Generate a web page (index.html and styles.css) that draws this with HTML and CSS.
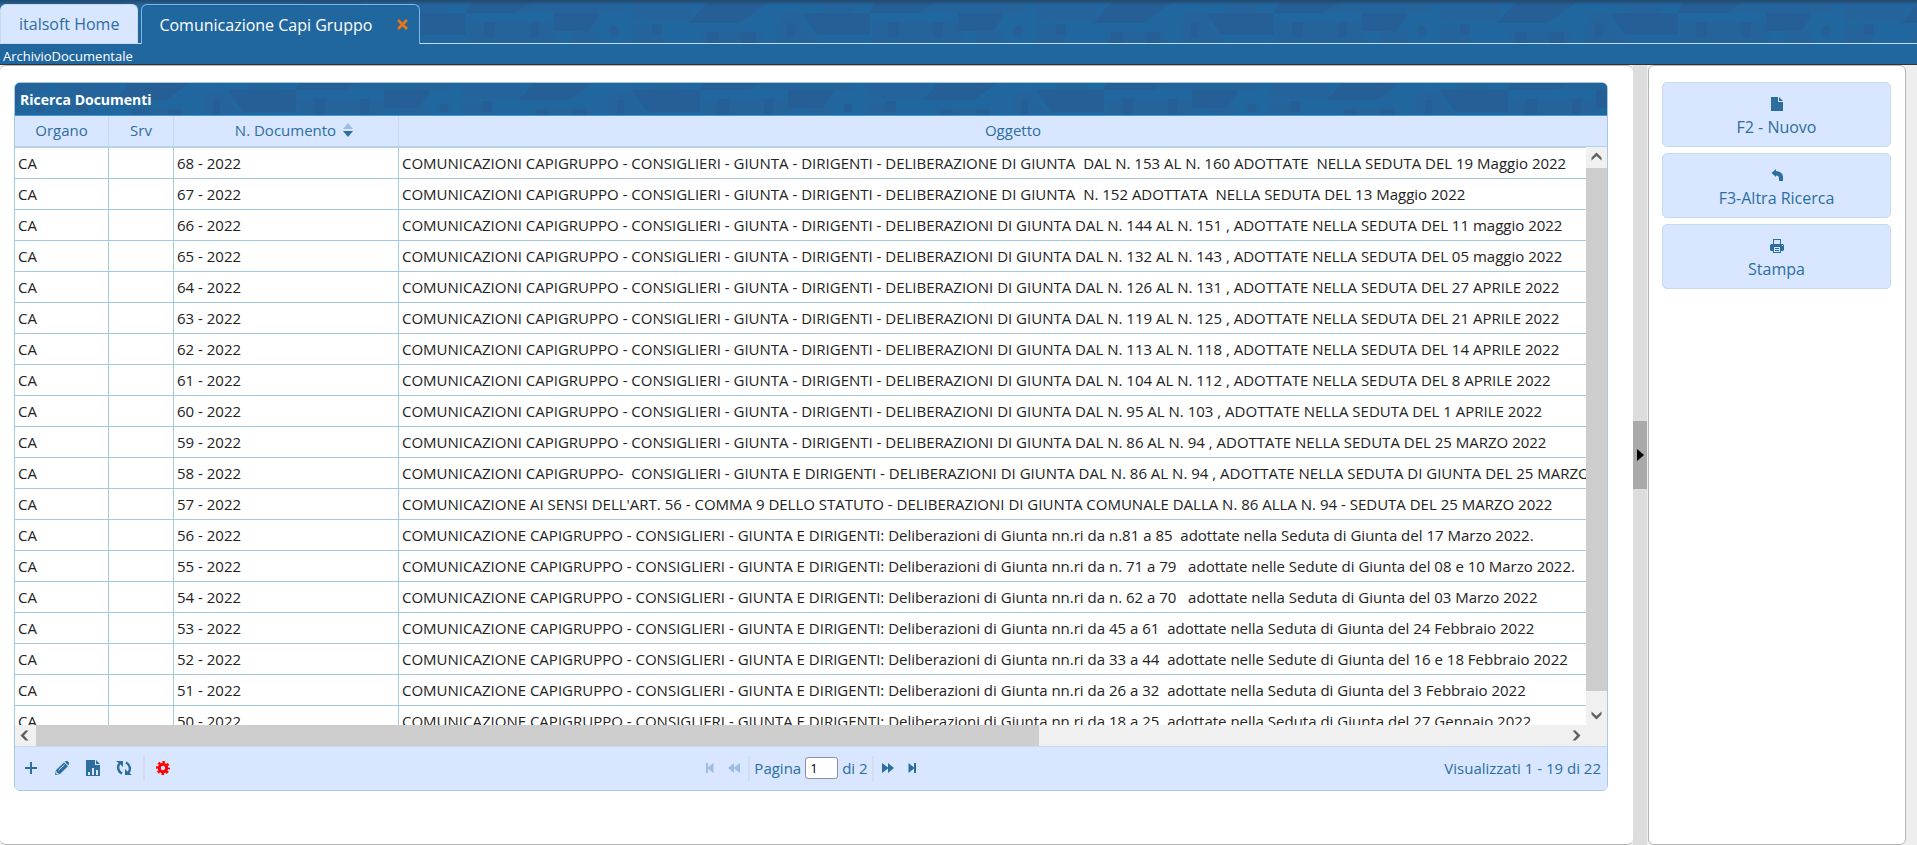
FILE: index.html
```html
<!DOCTYPE html>
<html lang="it">
<head>
<meta charset="utf-8">
<title>Comunicazione Capi Gruppo</title>
<link rel="stylesheet" href="styles.css">
</head>
<body>
<svg class="defs" width="0" height="0" aria-hidden="true">
  <defs>
    <pattern id="blocks" x="168" y="0" width="404" height="128" patternUnits="userSpaceOnUse">
      <rect width="404" height="128" fill="#21679f"/>
      <g fill="#24649b">
        <path d="M0 2h50v11H0zM60 2h14v20H60zM0 31h27v12H0zM60 25h30v18H60zM75 2h45v20H75zM386 2h18v11h-18zM300 22h90v21h-90zM250 2h30v11h-30zM208 13h30v9h-30zM340 4h50v8h-50z"/>
        <path d="M130 43V31h60v12zM205 43V22l25 0 20 21z"/>
      </g>
      <g fill="#265f95">
        <path d="M135 2h62l-29 21h-51zM230 13h68v22h-53zM302 2h62l-17 11h-49zM386 13h18v18h-18zM0 13h27v4l-10 14H0z"/>
        <path d="M362 22h9v15h-9zM316 22h11v15h-11zM135 32h12v11h-12zM170 32h14v11h-14zM80 24h10v11H80zM215 23h7v14h-7z"/>
        <circle cx="42" cy="31" r="5"/>
      </g>
    </pattern>
    <pattern id="blocks-title" href="#blocks" x="387" y="-6"/>
  </defs>
</svg>
<header class="top">
  <svg class="texture" aria-hidden="true"><rect width="100%" height="100%" fill="url(#blocks)"/></svg>
  <nav class="tabs">
    <a class="tab" href="#home">italsoft Home</a>
    <div class="tab active">
      <a href="#capi">Comunicazione Capi Gruppo</a>
      <button class="close" aria-label="Chiudi"><svg width="11" height="11" viewBox="0 0 11 11"><path d="M1 1l9 9M10 1l-9 9" stroke="#ed7612" stroke-width="2.6"/></svg></button>
    </div>
  </nav>
</header>
<div class="crumb">ArchivioDocumentale</div>
<main class="layout">
  <section class="panel main-panel">
    <div class="grid">
      <div class="grid-title">
        <svg class="texture" aria-hidden="true"><rect width="100%" height="100%" fill="url(#blocks-title)"/></svg>
        <h1>Ricerca Documenti</h1>
      </div>
      <div class="viewport">
        <table>
          <colgroup><col class="c1"><col class="c2"><col class="c3"><col class="c4"></colgroup>
          <thead><tr><th>Organo</th><th>Srv</th><th><span class="sort">N. Documento <svg width="10" height="14" viewBox="0 0 10 14"><path d="M5 0l5 6H0z" fill="#9dbce2"/><path d="M0 8h10l-5 6z" fill="#2e6e9e"/></svg></span></th><th>Oggetto</th></tr></thead>
          <tbody>
            <tr><td>CA</td><td></td><td>68 - 2022</td><td>COMUNICAZIONI CAPIGRUPPO - CONSIGLIERI - GIUNTA - DIRIGENTI - DELIBERAZIONE DI GIUNTA  DAL N. 153 AL N. 160 ADOTTATE  NELLA SEDUTA DEL 19 Maggio 2022</td></tr>
            <tr><td>CA</td><td></td><td>67 - 2022</td><td>COMUNICAZIONI CAPIGRUPPO - CONSIGLIERI - GIUNTA - DIRIGENTI - DELIBERAZIONE DI GIUNTA  N. 152 ADOTTATA  NELLA SEDUTA DEL 13 Maggio 2022</td></tr>
            <tr><td>CA</td><td></td><td>66 - 2022</td><td>COMUNICAZIONI CAPIGRUPPO - CONSIGLIERI - GIUNTA - DIRIGENTI - DELIBERAZIONI DI GIUNTA DAL N. 144 AL N. 151 , ADOTTATE NELLA SEDUTA DEL 11 maggio 2022</td></tr>
            <tr><td>CA</td><td></td><td>65 - 2022</td><td>COMUNICAZIONI CAPIGRUPPO - CONSIGLIERI - GIUNTA - DIRIGENTI - DELIBERAZIONI DI GIUNTA DAL N. 132 AL N. 143 , ADOTTATE NELLA SEDUTA DEL 05 maggio 2022</td></tr>
            <tr><td>CA</td><td></td><td>64 - 2022</td><td>COMUNICAZIONI CAPIGRUPPO - CONSIGLIERI - GIUNTA - DIRIGENTI - DELIBERAZIONI DI GIUNTA DAL N. 126 AL N. 131 , ADOTTATE NELLA SEDUTA DEL 27 APRILE 2022</td></tr>
            <tr><td>CA</td><td></td><td>63 - 2022</td><td>COMUNICAZIONI CAPIGRUPPO - CONSIGLIERI - GIUNTA - DIRIGENTI - DELIBERAZIONI DI GIUNTA DAL N. 119 AL N. 125 , ADOTTATE NELLA SEDUTA DEL 21 APRILE 2022</td></tr>
            <tr><td>CA</td><td></td><td>62 - 2022</td><td>COMUNICAZIONI CAPIGRUPPO - CONSIGLIERI - GIUNTA - DIRIGENTI - DELIBERAZIONI DI GIUNTA DAL N. 113 AL N. 118 , ADOTTATE NELLA SEDUTA DEL 14 APRILE 2022</td></tr>
            <tr><td>CA</td><td></td><td>61 - 2022</td><td>COMUNICAZIONI CAPIGRUPPO - CONSIGLIERI - GIUNTA - DIRIGENTI - DELIBERAZIONI DI GIUNTA DAL N. 104 AL N. 112 , ADOTTATE NELLA SEDUTA DEL 8 APRILE 2022</td></tr>
            <tr><td>CA</td><td></td><td>60 - 2022</td><td>COMUNICAZIONI CAPIGRUPPO - CONSIGLIERI - GIUNTA - DIRIGENTI - DELIBERAZIONI DI GIUNTA DAL N. 95 AL N. 103 , ADOTTATE NELLA SEDUTA DEL 1 APRILE 2022</td></tr>
            <tr><td>CA</td><td></td><td>59 - 2022</td><td>COMUNICAZIONI CAPIGRUPPO - CONSIGLIERI - GIUNTA - DIRIGENTI - DELIBERAZIONI DI GIUNTA DAL N. 86 AL N. 94 , ADOTTATE NELLA SEDUTA DEL 25 MARZO 2022</td></tr>
            <tr><td>CA</td><td></td><td>58 - 2022</td><td>COMUNICAZIONI CAPIGRUPPO-  CONSIGLIERI - GIUNTA E DIRIGENTI - DELIBERAZIONI DI GIUNTA DAL N. 86 AL N. 94 , ADOTTATE NELLA SEDUTA DI GIUNTA DEL 25 MARZO 2022</td></tr>
            <tr><td>CA</td><td></td><td>57 - 2022</td><td>COMUNICAZIONE AI SENSI DELL'ART. 56 - COMMA 9 DELLO STATUTO - DELIBERAZIONI DI GIUNTA COMUNALE DALLA N. 86 ALLA N. 94 - SEDUTA DEL 25 MARZO 2022</td></tr>
            <tr><td>CA</td><td></td><td>56 - 2022</td><td>COMUNICAZIONE CAPIGRUPPO - CONSIGLIERI - GIUNTA E DIRIGENTI: Deliberazioni di Giunta nn.ri da n.81 a 85  adottate nella Seduta di Giunta del 17 Marzo 2022.</td></tr>
            <tr><td>CA</td><td></td><td>55 - 2022</td><td>COMUNICAZIONE CAPIGRUPPO - CONSIGLIERI - GIUNTA E DIRIGENTI: Deliberazioni di Giunta nn.ri da n. 71 a 79   adottate nelle Sedute di Giunta del 08 e 10 Marzo 2022.</td></tr>
            <tr><td>CA</td><td></td><td>54 - 2022</td><td>COMUNICAZIONE CAPIGRUPPO - CONSIGLIERI - GIUNTA E DIRIGENTI: Deliberazioni di Giunta nn.ri da n. 62 a 70   adottate nella Seduta di Giunta del 03 Marzo 2022</td></tr>
            <tr><td>CA</td><td></td><td>53 - 2022</td><td>COMUNICAZIONE CAPIGRUPPO - CONSIGLIERI - GIUNTA E DIRIGENTI: Deliberazioni di Giunta nn.ri da 45 a 61  adottate nella Seduta di Giunta del 24 Febbraio 2022</td></tr>
            <tr><td>CA</td><td></td><td>52 - 2022</td><td>COMUNICAZIONE CAPIGRUPPO - CONSIGLIERI - GIUNTA E DIRIGENTI: Deliberazioni di Giunta nn.ri da 33 a 44  adottate nelle Sedute di Giunta del 16 e 18 Febbraio 2022</td></tr>
            <tr><td>CA</td><td></td><td>51 - 2022</td><td>COMUNICAZIONE CAPIGRUPPO - CONSIGLIERI - GIUNTA E DIRIGENTI: Deliberazioni di Giunta nn.ri da 26 a 32  adottate nella Seduta di Giunta del 3 Febbraio 2022</td></tr>
            <tr><td>CA</td><td></td><td>50 - 2022</td><td>COMUNICAZIONE CAPIGRUPPO - CONSIGLIERI - GIUNTA E DIRIGENTI: Deliberazioni di Giunta nn.ri da 18 a 25  adottate nella Seduta di Giunta del 27 Gennaio 2022</td></tr>
          </tbody>
        </table>
        <div class="vscroll">
          <svg class="arrow" viewBox="0 0 21 21"><path d="M5.500 13.500v-3L10.500 5.500l5 5v3l-5-4.500z"/></svg>
          <div class="vthumb"></div>
          <svg class="arrow" viewBox="0 0 21 21"><path d="M5.500 7.500v3l5 5 5-5v-3l-5 4.500z"/></svg>
        </div>
      </div>
      <div class="hscroll">
        <svg class="arrow" viewBox="0 0 21 21"><path d="M13.500 5.500h-3l-5 5 5 5h3L9 10.500z"/></svg>
        <div class="track"><div class="hthumb"></div></div>
        <svg class="arrow" viewBox="0 0 21 21"><path d="M7.500 5.500h3l5 5-5 5h-3l4.500-5z"/></svg>
        <div class="corner"></div>
      </div>
      <footer class="pager">
        <div class="tools">
          <button aria-label="Aggiungi"><svg width="16" height="16" viewBox="0 0 16 16"><path d="M8 2v12M2 8h12" stroke="currentColor" stroke-width="2"/></svg></button>
          <button aria-label="Modifica"><svg width="16" height="16" viewBox="0 0 16 16"><path fill="currentColor" d="M1 15l1-5L10 2.500 14 6.200 6 14zM10.800 1.800l1-.8h1.600L15 2.700v1.500l-.8 1z"/><path d="M4.500 10.200l6-5.500M2.500 11.500v2h2" fill="none" stroke="#d8e6ff" stroke-width=".9"/></svg></button>
          <button aria-label="Esporta"><svg width="16" height="16" viewBox="0 0 16 16"><path fill="currentColor" d="M1 0h9v5h5v11H1zM11 0l4 4h-4z"/><path fill="#d8e6ff" d="M3 12h2v3H3zM7 8h2v7H7zM11 10h2v5h-2z"/></svg></button>
          <button aria-label="Aggiorna"><svg width="16" height="16" viewBox="0 0 16 16"><path d="M4 3C1 6 1.500 11 6 13.500M12 13c3-3 2.500-8-2-10.500" fill="none" stroke="currentColor" stroke-width="2.400"/><path fill="currentColor" d="M0 1h7v6L4.500 4.500zM16 15H9V9l2.500 2.500z"/></svg></button>
          <span class="sep"></span>
          <button class="gear" aria-label="Impostazioni"><svg width="14" height="14" viewBox="0 0 14 14"><circle cx="7" cy="7" r="3.700" fill="none" stroke="currentColor" stroke-width="3"/><circle cx="7" cy="7" r="5.900" fill="none" stroke="currentColor" stroke-width="2.200" stroke-dasharray="2.500 2.134" stroke-dashoffset="1.250"/></svg></button>
        </div>
        <div class="pages">
          <button disabled aria-label="Prima pagina"><svg width="12" height="12" viewBox="0 0 12 12"><path fill="currentColor" d="M2 1h2v4.500L9.500 1v10L4 6.500V11H2z"/></svg></button>
          <button disabled aria-label="Pagina precedente"><svg width="12" height="12" viewBox="0 0 12 12"><path fill="currentColor" d="M0 6l6-5v4.500L12 1v10L6 6.500V11z"/></svg></button>
          <span class="sep"></span>
          <label for="page">Pagina</label>
          <input id="page" type="text" value="1">
          <span>di 2</span>
          <span class="sep"></span>
          <button aria-label="Pagina successiva"><svg width="12" height="12" viewBox="0 0 12 12"><path fill="currentColor" d="M12 6L6 1v4.500L0 1v10l6-4.500V11z"/></svg></button>
          <button aria-label="Ultima pagina"><svg width="12" height="12" viewBox="0 0 12 12"><path fill="currentColor" d="M10 1H8v4.500L2.500 1v10L8 6.500V11h2z"/></svg></button>
        </div>
        <div class="count">Visualizzati 1 - 19 di 22</div>
      </footer>
    </div>
  </section>
  <div class="splitter"><button class="handle" aria-label="Comprimi"><svg width="7" height="12" viewBox="0 0 7 12"><path d="M0 0l7 6-7 6z"/></svg></button></div>
  <aside class="panel side-panel">
    <button class="action"><svg width="14" height="14" viewBox="0 0 14 14"><path fill="currentColor" d="M1 0h7v5h5v9H1zM9 0l4 4H9z"/></svg><span>F2 - Nuovo</span></button>
    <button class="action"><svg width="14" height="14" viewBox="0 0 14 14"><path fill="currentColor" d="M1.500 5L6 1v2c5 .5 7 3 7 6v4H9v-2.500C9 8.500 8 7.500 6 7.500V9z"/></svg><span>F3-Altra Ricerca</span></button>
    <button class="action"><svg width="14" height="14" viewBox="0 0 14 14"><path fill="currentColor" fill-rule="evenodd" d="M3 0h8v5h2l1 1v5l-1 1h-2v2H3v-2H1l-1-1V6l1-1h2zM4 1v4h6V1zM4 8v5h6V8zM12 6h1v1h-1zM5 9h4v1H5zM5 11h4v1H5z"/></svg><span>Stampa</span></button>
  </aside>
</main>
</body>
</html>
```
FILE: styles.css
```css
* { box-sizing: border-box; }
html, body { height: 100%; }
body {
  margin: 0;
  display: flex;
  flex-direction: column;
  overflow: hidden;
  background: #eee;
  color: #222;
  font: 15px/20px "Open Sans", sans-serif;
}
button { padding: 0; border: 0; background: none; color: inherit; font: inherit; }
a { color: inherit; text-decoration: none; }
svg { display: block; }
.defs { position: absolute; }
.texture { position: absolute; inset: 0; width: 100%; height: 100%; }

.top {
  position: relative;
  height: 44px;
  flex: none;
  background: #21679f;
  border-bottom: 1px solid #c5dbec;
}
.top::after {
  content: "";
  position: absolute;
  inset: 0 0 auto;
  height: 5px;
  background: linear-gradient(#24486b, transparent);
}
.tabs {
  position: relative;
  z-index: 1;
  display: flex;
  gap: 3px;
  height: 44px;
  padding-top: 4px;
  font-size: 16px;
}
.tab {
  display: flex;
  align-items: center;
  height: 39px;
  padding: 0 18px;
  border: 1px solid #c5dbec;
  border-bottom: 0;
  border-radius: 6px 6px 0 0;
  background: #d8e6ff;
  color: #2e6e9e;
}
.tab.active {
  height: 40px;
  gap: 25px;
  padding: 0 11px 0 17px;
  border-color: #79b7e7;
  background: #21679f;
  color: #fff;
}
.crumb {
  flex: none;
  height: 21px;
  padding-left: 3px;
  border-bottom: 1px solid #333;
  background: #21679f;
  color: #fff;
  font-size: 13px;
  line-height: 24px;
}

.layout { display: flex; flex: 1; min-height: 0; }
.panel { border: 1px solid #b5b5b5; border-radius: 6px; background: #fff; }
.main-panel { flex: 1; min-width: 0; padding: 16px 25px 0 14px; border-left: 0; border-right: 0; }
.splitter { display: flex; align-items: center; width: 14px; margin-right: 1px; background: #ddd; }
.handle { display: flex; align-items: center; justify-content: center; width: 14px; height: 68px; background: #aaa; }
.side-panel {
  width: 258px;
  margin-right: 11px;
  padding: 16px 14px 16px 13px;
  display: flex;
  flex-direction: column;
  gap: 6px;
}
.action {
  display: flex;
  flex-direction: column;
  align-items: center;
  height: 65px;
  padding-top: 14px;
  gap: 6px;
  border: 1px solid #c5dbec;
  border-radius: 5px;
  background: #d8e6ff;
  color: #2e6e9e;
  font-size: 16px;
}

.grid { border: 1px solid #a6c9e2; border-radius: 6px; overflow: hidden; }
.grid-title { position: relative; height: 33px; border-bottom: 1px solid #4297d7; background: #21679f; }
.grid-title h1 {
  position: relative;
  margin: 0;
  padding-left: 5px;
  color: #fff;
  font-size: 14px;
  line-height: 34px;
}
.viewport { position: relative; height: 609px; overflow: hidden; }
table { width: 1613px; border-collapse: separate; border-spacing: 0; table-layout: fixed; }
.c1 { width: 94px; }
.c2 { width: 65px; }
.c3 { width: 225px; }
th {
  height: 32px;
  padding: 0 0 2px;
  border-right: 1px solid #c5dbec;
  border-bottom: 2px solid #b5d2e6;
  background: #d8e6ff;
  color: #2e6e9e;
  font-weight: 400;
}
.sort { display: inline-flex; align-items: center; gap: 7px; padding-left: 16px; }
td {
  height: 31px;
  padding: 0 3px 1px;
  border-right: 1px solid #a6c9e2;
  border-bottom: 1px solid #a6c9e2;
  overflow: hidden;
  white-space: pre;
}
.vscroll {
  position: absolute;
  top: 31px;
  right: 0;
  bottom: 0;
  width: 21px;
  display: flex;
  flex-direction: column;
  background: #f0f0f0;
}
.arrow { width: 21px; height: 21px; flex: none; fill: #606060; }
.vthumb { height: 523px; background: #cdcdcd; }
.vscroll .arrow:last-child { margin-top: auto; }
.hscroll { display: flex; height: 21px; background: #f0f0f0; }
.track { flex: 1; }
.hthumb { width: 65.6%; height: 21px; background: #cdcdcd; }
.corner { width: 21px; }

.pager {
  display: grid;
  grid-template-columns: 1fr auto 1fr;
  align-items: center;
  height: 44px;
  padding-bottom: 1px;
  border-top: 1px solid #c5dbec;
  background: #d8e6ff;
  color: #2e6e9e;
}
.tools { display: flex; align-items: center; gap: 15px; padding-left: 8px; }
.tools .sep { margin: 0 -4px; }
.sep { width: 2px; height: 25px; background: #d3dcea; }
.gear { color: #f00; }
.pages { display: flex; align-items: center; gap: 4px; }
.pages button { margin: 0 4px; }
.pages button:disabled { color: #9dbce2; }
.pages input {
  width: 33px;
  height: 22px;
  padding: 0 4px;
  border: 1px solid #8f8f9d;
  border-radius: 3px;
  background: #fff;
  color: #000;
  font: 13px "Open Sans", sans-serif;
}
.count { padding-right: 6px; text-align: right; }
```
